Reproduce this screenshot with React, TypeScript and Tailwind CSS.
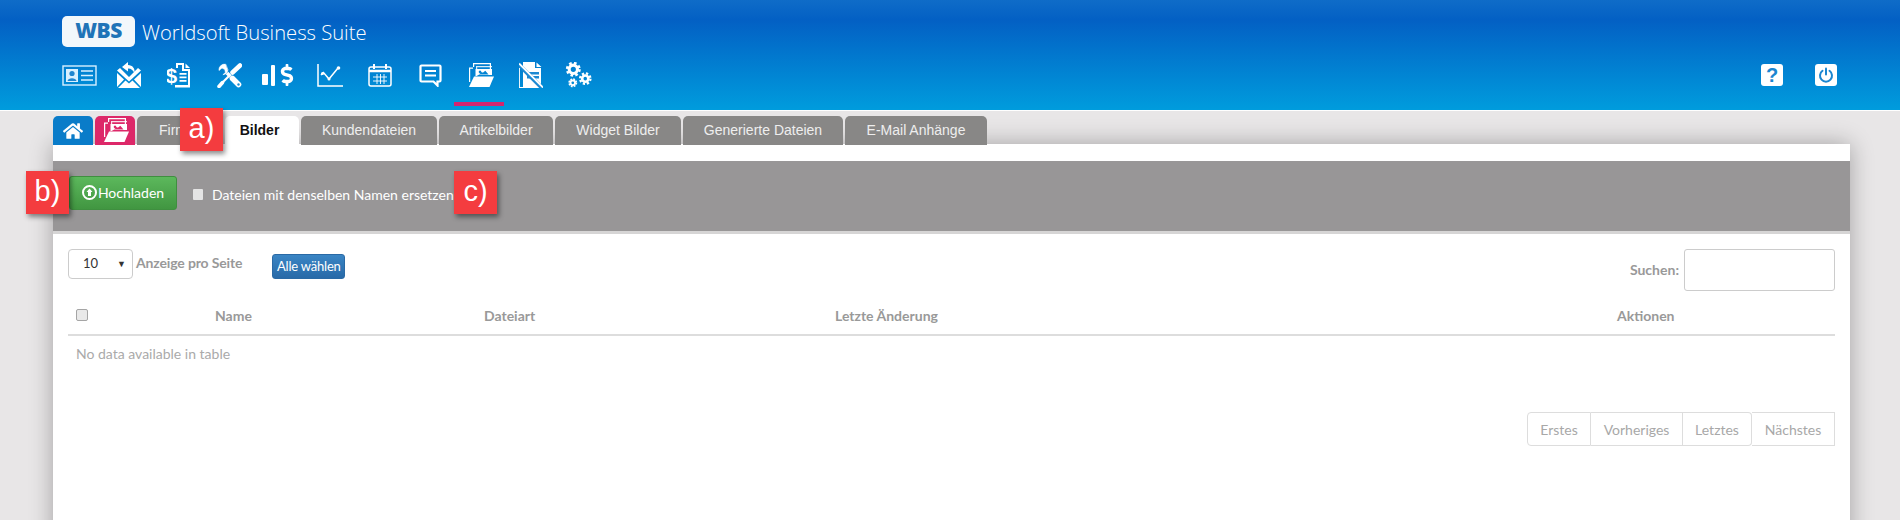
import React from 'react'
import { FaDollarSign, FaHome } from 'react-icons/fa'

function IdCardIcon() {
  return (
    <svg width="35" height="21" viewBox="0 0 35 21" fill="none" stroke="#d8f0ff" strokeWidth="1.4">
      <rect x="1" y="1" width="33" height="19" />
      <rect x="4" y="4" width="12" height="13" fill="#d8f0ff" stroke="none" />
      <circle cx="10" cy="8.5" r="2.6" fill="#1f86d0" stroke="none" />
      <path d="M5.5 16c.6-3.6 8.4-3.6 9 0z" fill="#1f86d0" stroke="none" />
      <path d="M19 6h12M19 10.500h12M19 15h12" strokeWidth="1.6" />
    </svg>
  )
}

function MailIcon() {
  return (
    <svg width="26" height="28" viewBox="0 0 26 28" fill="white">
      <path d="M1 12l7 6.500-7 7.500zM25 12v14l-7-7.500zM2 27l7.500-7.500 3.500 3 3.500-3L24 27z" />
      <path d="M1 9.500l3-2.500 9 9 9-9 3 2.500-12 11z" />
      <path d="M12 1L6 6l6 4.500V7.500c3.500 0 5.500 2 6.500 5 .8-5-2-8.500-6.500-8.500z" />
    </svg>
  )
}

function MoneyDocIcon() {
  return (
    <svg width="24" height="25" viewBox="0 0 24 25" fill="white">
      <path d="M9 0h8v6h6v18.500H8v-2.500h13V8h-6V2h-4v3H9z" />
      <path d="M18.500 .5l4.500 4.500h-4.500z" />
      <path d="M12.500 10h7v1.700h-7zM12.500 13.500h7v1.700h-7zM12.500 17h7v1.700h-7z" />
      <text x="-1.500" y="19.500" fontSize="21" fontWeight="700" fontFamily="'Liberation Sans', sans-serif">$</text>
    </svg>
  )
}

function ToolsIcon() {
  return (
    <svg width="25" height="25" viewBox="0 0 25 25" fill="none" stroke="white" strokeLinecap="round">
      <path d="M8.500 1.200A5.500 5.500 0 0 0 2 7.500l3-2.500 2.800 1.500.6 3 -2.500 2.200a5.500 5.500 0 0 0 5-4.500z" fill="white" strokeWidth=".6" />
      <path d="M10 10l3.500 3.500" strokeWidth="3.500" strokeLinecap="butt" />
      <path d="M15.500 15.500l6 6" strokeWidth="5.500" />
      <circle cx="21.500" cy="21.500" r="1.200" fill="#1a8fd6" stroke="none" />
      <path d="M23 2.500l-7.500 7" strokeWidth="4.500" />
      <path d="M13 12L5 20" strokeWidth="2.200" strokeLinecap="butt" />
      <path d="M5.500 19.500l-3.500 4" strokeWidth="3.500" />
    </svg>
  )
}

function ChartIcon() {
  return (
    <svg width="26" height="23" viewBox="0 0 26 23" fill="none" stroke="white" strokeWidth="1.5">
      <path d="M1 0v22h25" />
      <path d="M4 11l2.500-2.500L12 15l9-11" />
      <circle cx="5.500" cy="9.500" r="1.500" fill="white" stroke="none" />
      <circle cx="12" cy="15" r="1.500" fill="white" stroke="none" />
      <circle cx="21.500" cy="4" r="1.800" fill="white" stroke="none" />
    </svg>
  )
}

function CalendarIcon() {
  return (
    <svg width="24" height="23" viewBox="0 0 24 23" fill="none" stroke="white">
      <rect x="1" y="3" width="22" height="19" rx="2" strokeWidth="1.500" />
      <path d="M1 7h22" strokeWidth="2.500" />
      <path d="M6 0v5M18 0v5" strokeWidth="2" />
      <path d="M5 13h14M5 17h14M9 10v10M12.500 10v10M16 10v10" strokeWidth=".9" />
    </svg>
  )
}

function MessageIcon() {
  return (
    <svg width="23" height="23" viewBox="0 0 23 23" fill="none" stroke="white">
      <path d="M2.500 1.500h18a1 1 0 0 1 1 1v14a1 1 0 0 1-1 1h-2v4l-4-4h-12a1 1 0 0 1-1-1v-14a1 1 0 0 1 1-1z" strokeWidth="2.200" />
      <path d="M6 7h11M6 11.500h11" strokeWidth="2" />
    </svg>
  )
}

function FolderImagesIcon({ size = 27 }: { size?: number }) {
  return (
    <svg width={size} height={size * 0.89} viewBox="0 0 27 24" fill="white">
      <path d="M6 0h18v11h-1.200V1.200H7.200V4H6z" />
      <path d="M9 3h16v1.200H10.200V6H9z" opacity=".85" />
      <path d="M2 4.500h4v1.200H3.200V19H2z" />
      <path d="M8.500 6H25v6H11.500l-3 1.500zM13 7.500a1.300 1.300 0 1 0 .01 0zM11.500 11.500h10l-3.200-3.800-2.500 2-1-.8z" fillRule="evenodd" />
      <path d="M7 13.500h20L22.500 24H2z" />
    </svg>
  )
}

function NoDocIcon() {
  return (
    <svg width="24" height="26" viewBox="0 0 24 26" fill="none">
      <path d="M4 0h12v6h6v20H4zM17.500.5l5 4.500h-5z" fill="white" />
      <path d="M8 10h12v2.500H8zM8 14h12v2.500H8z" fill="#1d89d2" />
      <path d="M0 3l23 23" stroke="#1d89d2" strokeWidth="4" />
      <path d="M0 1.500l24 24" stroke="white" strokeWidth="1.800" />
      <path d="M0 6v20h11" stroke="white" strokeWidth="1.800" />
    </svg>
  )
}

function GearsIcon() {
  return (
    <svg width="27" height="26" viewBox="0 0 26 25" fill="none" stroke="white" className="-ml-[4px]">
      <circle cx="8" cy="7" r="4" strokeWidth="3" />
      <circle cx="8" cy="7" r="6" strokeWidth="2.400" strokeDasharray="2.500 2.200" />
      <circle cx="19.500" cy="16" r="3" strokeWidth="2.600" />
      <circle cx="19.500" cy="16" r="5" strokeWidth="2.200" strokeDasharray="2.200 1.730" />
      <circle cx="7.500" cy="20" r="2.200" strokeWidth="1.800" />
      <circle cx="7.500" cy="20" r="3.500" strokeWidth="1.600" strokeDasharray="1.700 1.050" />
    </svg>
  )
}

function BarDollarIcon() {
  return (
    <div className="flex items-end gap-[2px]">
      <div className="mb-[1px] h-[11px] w-[6px] rounded-[1px] bg-white" />
      <div className="ml-[1px] h-[21px] w-[4px] rounded-[1px] bg-white" />
      <FaDollarSign className="-ml-[1px] text-white" size={22} />
    </div>
  )
}

const navIcons = [
  <IdCardIcon />,
  <MailIcon />,
  <MoneyDocIcon />,
  <ToolsIcon />,
  <BarDollarIcon />,
  <ChartIcon />,
  <CalendarIcon />,
  <MessageIcon />,
  <FolderImagesIcon />,
  <NoDocIcon />,
  <GearsIcon />,
]

function Header() {
  return (
    <header className="h-[110px] bg-[linear-gradient(#0f6cc8_0%,#0360c4_18%,#009cdd_100%)] pt-[15px] pl-[54px] pr-[63px]">
      <div className="ml-[8px] flex items-center gap-[7px]">
        <div className="flex h-[31px] w-[73px] items-center justify-center rounded-[5px] bg-[#f2f7fb] text-[21px] font-extrabold tracking-[-0.5px] text-[#1f74b8] font-['Open_Sans',sans-serif]">
          WBS
        </div>
        <span className="mt-[2px] text-[20.200px] font-light text-white font-['Open_Sans',sans-serif]">Worldsoft Business Suite</span>
      </div>
      <div className="mt-[13px] flex items-start justify-between">
        <nav className="flex">
          {navIcons.map((icon, i) => (
            <div key={i} className="w-[50.200px]">
              <div className="flex h-[30px] items-center justify-center">{icon}</div>
              {i === 8 && <div className="-ml-[2px] mt-[12px] h-[4px] w-[50px] bg-[#d4266f]" />}
            </div>
          ))}
        </nav>
        <div className="flex gap-[32px] pt-[4px]">
          <div className="flex h-[22px] w-[22px] items-center justify-center rounded-[3px] bg-white text-[20px] leading-none font-bold text-[#1b86d0] font-['Liberation_Sans',sans-serif]">?</div>
          <div className="flex h-[22px] w-[22px] items-center justify-center rounded-[3px] bg-white">
            <svg width="16" height="16" viewBox="0 0 16 16" fill="none" stroke="#1b86d0" strokeWidth="2" strokeLinecap="round">
              <path d="M8 1.500v6" />
              <path d="M4.500 3.800a6 6 0 1 0 7 0" />
            </svg>
          </div>
        </div>
      </div>
    </header>
  )
}

const tabs = [
  { label: 'Firm', w: 'w-[86px]', justify: 'justify-start pl-[22px]' },
  { label: 'Bilder', w: 'w-[74px]', justify: 'justify-center pr-[5px]', active: true },
  { label: 'Kundendateien', w: 'w-[136px]' },
  { label: 'Artikelbilder', w: 'w-[114px]' },
  { label: 'Widget Bilder', w: 'w-[126px]' },
  { label: 'Generierte Dateien', w: 'w-[160px]' },
  { label: 'E-Mail Anhänge', w: 'w-[142px]' },
]

function Tabs() {
  return (
    <div className="relative z-10 -mb-px flex h-[29px] gap-[2px] font-['Liberation_Sans',sans-serif] text-[14px]">
      <div className="flex w-[40px] items-center justify-center rounded-t-[5px] bg-[#0a7cc9] text-white">
        <FaHome size={20} />
      </div>
      <div className="flex w-[40px] items-center justify-center rounded-t-[5px] bg-[#dd2869]">
        <FolderImagesIcon size={27} />
      </div>
      {tabs.map((t) => (
        <div
          key={t.label}
          className={
            'flex items-center rounded-t-[5px] ' +
            t.w + ' ' + (t.justify ?? 'justify-center') + ' ' +
            (t.active ? 'bg-white font-bold text-[#111]' : 'bg-[#888786] text-[#eeeeee]')
          }
        >
          {t.label}
        </div>
      ))}
    </div>
  )
}

function Badge({ className, children }: { className: string; children: React.ReactNode }) {
  return (
    <div className={'absolute z-20 flex h-[43px] w-[43px] items-center justify-center bg-[#f43c3f] pb-[2px] text-[29px] text-white shadow-[2px_3px_5px_rgba(0,0,0,0.45)] font-[\'Liberation_Sans\',sans-serif] ' + className}>
      {children}
    </div>
  )
}

function Toolbar() {
  return (
    <div className="flex h-[73px] items-start border-b-[3px] border-[#d6d5d5] bg-[#989697] pl-[16px] pt-[15px]">
      <button className="flex h-[34px] w-[108px] items-center justify-center gap-[1px] rounded-[3px] border border-[#3f8f3f] bg-gradient-to-b from-[#5cb85c] to-[#419641] pb-[1px] text-[14px] text-white">
        <svg width="15" height="15" viewBox="0 0 15 15">
          <circle cx="7.500" cy="7.500" r="6.500" fill="none" stroke="white" strokeWidth="2" />
          <path d="M7.500 3.500l3 3.500H9v4H6V7H4.500z" fill="white" />
        </svg>
        Hochladen
      </button>
      <label className="ml-[16px] mt-[8px] flex items-center gap-[9px] text-[14px] text-white">
        <span className="h-[11px] w-[10px] rounded-[1px] bg-[#e4e4e4]" />
        Dateien mit denselben Namen ersetzen
      </label>
    </div>
  )
}

function FileTable() {
  return (
    <table className="mt-[1px] w-full table-fixed border-collapse text-left text-[14px] text-[#999999]">
      <thead>
        <tr className="h-[43px] border-b-2 border-[#dddddd]">
          <th className="w-[139px] pl-[8px] align-top pt-[17px]">
            <div className="h-[12px] w-[12px] rounded-[2px] border border-[#a5a5a5] bg-[#e9e9e9]" />
          </th>
          <th className="w-[269px] pl-[8px] pt-[4px] font-bold">Name</th>
          <th className="w-[351px] pl-[8px] pt-[4px] font-bold">Dateiart</th>
          <th className="w-[782px] pl-[8px] pt-[4px] font-bold">Letzte Änderung</th>
          <th className="pl-[8px] pt-[4px] font-bold">Aktionen</th>
        </tr>
      </thead>
      <tbody>
        <tr className="h-[36px]">
          <td colSpan={5} className="pl-[8px] text-[#aaaaaa]">No data available in table</td>
        </tr>
      </tbody>
    </table>
  )
}

function Pagination() {
  return (
    <div className="mt-[41px] flex justify-end text-[14px] text-[#a8a8a8]">
      <span className="flex h-[34px] w-[64px] items-center justify-center rounded-l-[4px] border border-[#dddddd]">Erstes</span>
      <span className="flex h-[34px] w-[92px] items-center justify-center border-y border-r border-[#dddddd]">Vorheriges</span>
      <span className="flex h-[34px] w-[69px] items-center justify-center rounded-r-[4px] border-y border-r border-[#dddddd]">Letztes</span>
      <span className="flex h-[34px] w-[83px] items-center justify-center border-y border-r border-[#dddddd]">Nächstes</span>
    </div>
  )
}

export default function App() {
  return (
    <div className="relative h-[520px] overflow-hidden bg-[#e8e6e7] font-['Lato',sans-serif]">
      <Header />
      <div className="h-px bg-white" />
      <main className="ml-[53px] mr-[50px] mt-[5px]">
        <Tabs />
        <div className="h-[400px] bg-white pt-[17px] shadow-[0_0_22px_rgba(0,0,0,0.3)]">
          <Toolbar />
          <div className="px-[15px]">
            <div className="mt-[15px] flex items-start justify-between">
              <div className="flex items-start">
                <div className="flex h-[30px] w-[65px] items-center justify-between rounded-[4px] border border-[#cccccc] pl-[14px] pr-[6px] text-[13px] text-[#333333]">
                  10
                  <span className="text-[9px]">▼</span>
                </div>
                <span className="ml-[3px] mt-[3px] text-[14px] font-bold tracking-[-0.15px] text-[#999999]">Anzeige pro Seite</span>
                <button className="ml-[30px] mt-[5px] h-[25px] w-[73px] rounded-[3px] border border-[#2a6aa5] bg-gradient-to-b from-[#3a85c4] to-[#286aa8] text-[13px] tracking-[-0.2px] text-white">
                  Alle wählen
                </button>
              </div>
              <div className="flex items-start gap-[5px]">
                <span className="mt-[10px] text-[14px] font-bold text-[#999999]">Suchen:</span>
                <div className="h-[42px] w-[151px] rounded-[3px] border border-[#cccccc]" />
              </div>
            </div>
            <FileTable />
            <Pagination />
          </div>
        </div>
      </main>
      <Badge className="left-[180px] top-[108px]">a)</Badge>
      <Badge className="left-[26px] top-[171px]">b)</Badge>
      <Badge className="left-[454px] top-[171px]">c)</Badge>
    </div>
  )
}
